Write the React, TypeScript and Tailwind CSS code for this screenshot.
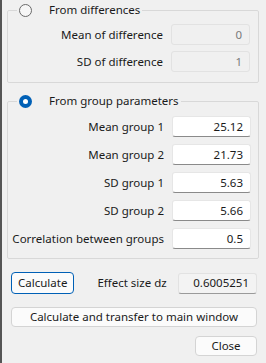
import React from 'react';

const font = { fontFamily: '"Noto Sans", "Liberation Sans", sans-serif' };

function Radio({ checked }: { checked?: boolean }) {
  if (checked) {
    return (
      <span className="flex h-[13px] w-[13px] items-center justify-center rounded-full bg-[#0060b6]">
        <span className="h-[5px] w-[5px] rounded-full bg-white" />
      </span>
    );
  }
  return <span className="block h-[13px] w-[13px] rounded-full border border-[#6a6a6a] bg-[#f6f6f6]" />;
}

function Field({ label, value, disabled }: { label: string; value: string; disabled?: boolean }) {
  return (
    <div className="flex items-center justify-end gap-[8px]">
      <span className="whitespace-nowrap text-[11.5px] text-[#1a1a1a]">{label}</span>
      <div
        className={
          disabled
            ? 'flex h-[21px] w-[79px] shrink-0 items-center justify-end rounded-[3px] border border-[#e2e2e2] bg-[#f0f0f0] pr-[7px] text-[11.5px] text-[#7a7a7a]'
            : 'flex h-[21px] w-[79px] shrink-0 items-center justify-end rounded-[3px] border border-[#e6e6e6] border-b-[#8a8a8a] bg-white pr-[7px] text-[11.5px] text-[#1a1a1a]'
        }
      >
        {value}
      </div>
    </div>
  );
}

function Group({ title, checked, children }: { title: string; checked?: boolean; children: React.ReactNode }) {
  return (
    <fieldset className="rounded-[2px] border border-[#d8d8d8]">
      <legend className="ml-[9px] flex items-center px-[2px]">
        <Radio checked={checked} />
        <span className="ml-[17px] text-[11.5px] leading-[18px] text-[#1a1a1a]">{title}</span>
      </legend>
      {children}
    </fieldset>
  );
}

export default function App() {
  return (
    <div style={font} className="h-[363px] w-[266px] border-l-2 border-[#555] bg-[#f0f0f0] pl-[5px] pr-[7px] pt-[1px]">
      <Group title="From differences">
        <div className="flex flex-col gap-[6px] pb-[10px] pr-[8px] pt-[5px]">
          <Field label="Mean of difference" value="0" disabled />
          <Field label="SD of difference" value="1" disabled />
        </div>
      </Group>

      <div className="mt-[9px]">
        <Group title="From group parameters" checked>
          <div className="flex flex-col gap-[7px] pb-[9px] pr-[7px] pt-[6px]">
            <Field label="Mean group 1" value="25.12" />
            <Field label="Mean group 2" value="21.73" />
            <Field label="SD group 1" value="5.63" />
            <Field label="SD group 2" value="5.66" />
            <Field label="Correlation between groups" value="0.5" />
          </div>
        </Group>
      </div>

      <div className="mt-[13px] flex items-center pl-[4px] pr-[2px]">
        <button className="h-[22px] rounded-[4px] border border-[#0060b6] bg-[#fbfbfb] px-[6px] text-[11.5px] text-[#1a1a1a]">
          Calculate
        </button>
        <span className="ml-[23px] text-[11.5px] text-[#1a1a1a]">Effect size dz</span>
        <div className="ml-auto flex h-[21px] w-[79px] items-center justify-end rounded-[3px] border border-[#e2e2e2] border-b-[#9a9a9a] bg-[#f3f3f3] pr-[7px] text-[11.5px] text-[#1a1a1a]">
          0.6005251
        </div>
      </div>

      <div className="mt-[9px] pl-[4px] pr-[2px]">
        <button className="h-[20px] w-full rounded-[4px] border border-[#d4d4d4] bg-[#fbfbfb] text-[11.5px] text-[#1a1a1a]">
          Calculate and transfer to main window
        </button>
      </div>

      <div className="mt-[9px] flex justify-end pr-[2px]">
        <button className="h-[20px] w-[62px] rounded-[4px] border border-[#d4d4d4] bg-[#fbfbfb] text-[11.5px] text-[#1a1a1a]">
          Close
        </button>
      </div>
    </div>
  );
}
